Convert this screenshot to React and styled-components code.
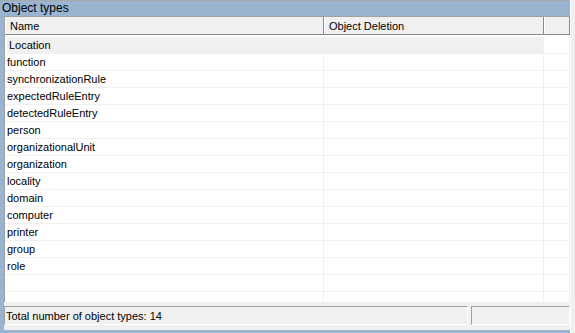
import styled, { createGlobalStyle } from 'styled-components';

const objectTypes = [
  'function',
  'synchronizationRule',
  'expectedRuleEntry',
  'detectedRuleEntry',
  'person',
  'organizationalUnit',
  'organization',
  'locality',
  'domain',
  'computer',
  'printer',
  'group',
  'role',
];

const GlobalStyle = createGlobalStyle`
  html, body {
    margin: 0;
    padding: 0;
    background: #f0f0f0;
    font-family: "Liberation Sans", Arial, sans-serif;
    font-size: 11px;
    color: #000;
  }
`;

const App = () => {
  const emptyRows = [0, 1, 2];

  return (
    <>
      <GlobalStyle />
      <Screen>
        <Frame>
          <Caption>Object types</Caption>
          <Body>
            <Content>
              <Grid>
                <HeaderRow>
                  <HeaderCell>Name</HeaderCell>
                  <HeaderCell>Object Deletion</HeaderCell>
                  <HeaderCell />
                </HeaderRow>
                <Rows>
                  <Row>
                    <Cell $group $first>Location</Cell>
                    <Cell $group />
                    <Cell />
                  </Row>
                  {objectTypes.map((name) => (
                    <Row key={name}>
                      <Cell>{name}</Cell>
                      <Cell />
                      <Cell />
                    </Row>
                  ))}
                  {emptyRows.map((i) => (
                    <Row key={`empty-${i}`}>
                      <Cell />
                      <Cell />
                      <Cell />
                    </Row>
                  ))}
                </Rows>
              </Grid>
              <StatusBar>
                <StatusPanel $grow>Total number of object types: {objectTypes.length + 1}</StatusPanel>
                <StatusPanel />
              </StatusBar>
            </Content>
          </Body>
          <BottomEdge />
        </Frame>
        <Gutter />
      </Screen>
    </>
  );
};

const Screen = styled.div`
  display: flex;
  width: 575px;
  height: 333px;
  overflow: hidden;
`;

const Frame = styled.div`
  width: 570px;
  display: flex;
  flex-direction: column;
  border-top: 1px solid #a8a8a8;
`;

const Caption = styled.div`
  height: 15px;
  line-height: 15px;
  padding-left: 2px;
  background: #99b4d1;
  font-size: 12px;
`;

const Body = styled.div`
  display: flex;
  height: 314px;
  border-left: 4px solid #99b4d1;
`;

const Content = styled.div`
  flex: 1;
  display: flex;
  flex-direction: column;
  background: #f0f0f0;
`;

const Grid = styled.div`
  height: 287px;
  background: #fff;
  border-left: 1px solid #a0a0a0;
  overflow: hidden;
`;

const columns = '319px 220px 1fr';

const HeaderRow = styled.div`
  display: grid;
  grid-template-columns: ${columns};
  height: 17px;
  border-top: 1px solid #a0a0a0;
  border-bottom: 1px solid #8c8c8c;
`;

const HeaderCell = styled.div`
  background: #f0f0f0;
  padding-left: 5px;
  line-height: 19px;
  border-right: 1px solid #8c8c8c;
  box-shadow: inset 1px 0 #fff;
  white-space: nowrap;
  overflow: hidden;
`;

const Rows = styled.div`
  padding-top: 2px;
`;

const Row = styled.div`
  display: grid;
  grid-template-columns: ${columns};
  height: 17px;
`;

const Cell = styled.div`
  padding-left: 2px;
  line-height: 17px;
  border-bottom: 1px solid #f0f0f0;
  border-right: 1px solid #f0f0f0;
  border-left: ${({ $first }) => ($first ? '2px solid #fff' : '0')};
  background: ${({ $group }) => ($group ? '#f0f0f0' : '#fff')};
  white-space: nowrap;
  overflow: hidden;
`;

const StatusBar = styled.div`
  display: flex;
  gap: 3px;
  padding: 4px 0 5px;
`;

const StatusPanel = styled.div`
  ${({ $grow }) => ($grow ? 'flex: 1;' : 'width: 96px;')}
  height: 17px;
  line-height: 19px;
  padding-left: 1px;
  border-top: 1px solid #a0a0a0;
  border-left: 1px solid #a0a0a0;
  border-bottom: 1px solid #fff;
  border-right: 1px solid #fff;
  white-space: nowrap;
  overflow: hidden;
`;

const BottomEdge = styled.div`
  height: 3px;
  background: #99b4d1;
`;

const Gutter = styled.div`
  flex: 1;
  border-left: 1px solid #fff;
  background: #f0f0f0;
`;

export default App;
